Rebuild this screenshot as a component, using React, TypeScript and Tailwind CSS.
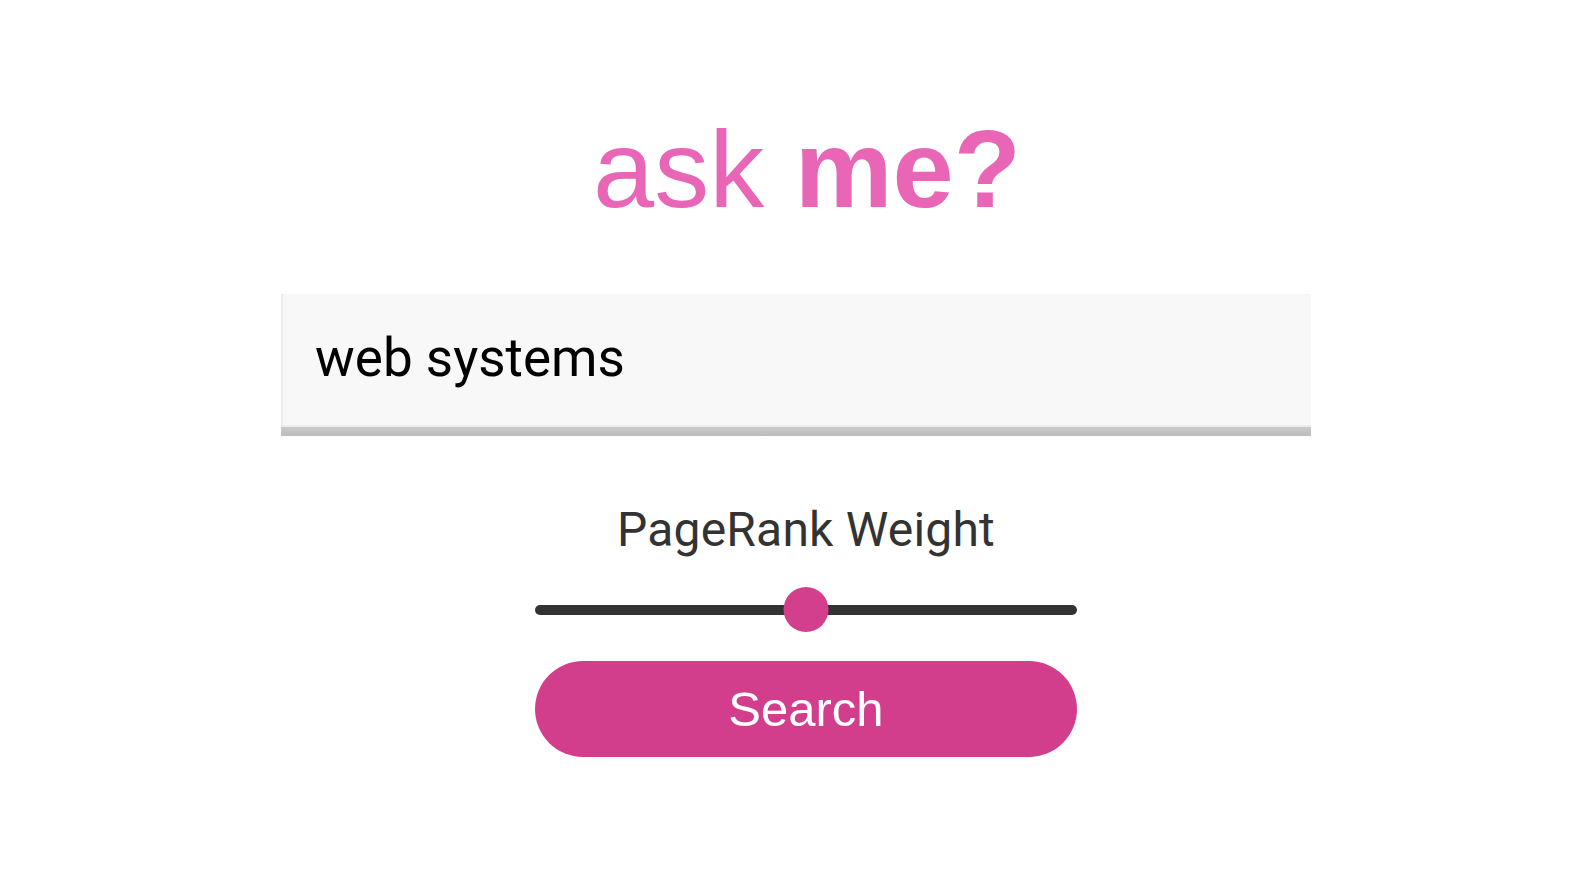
import React, { useState } from 'react';

// Search page: title, query box, pagerank weight slider and search button
const App: React.FC = () => {
  const [query] = useState('web systems');
  const [weight] = useState(50);

  return (
    <div className="min-h-screen w-full bg-white flex flex-col items-center pt-[114px]">
      <h1
        className="text-[110px] leading-none text-[#e866b5] ml-[22px]"
        style={{ fontFamily: '"Liberation Sans", Arial, sans-serif' }}
      >
        ask <span className="font-bold">me?</span>
      </h1>

      {/* Query box */}
      <div className="mt-[70px] w-[1030px] h-[142px] flex flex-col bg-[#f8f8f8] shadow-[inset_2px_0_2px_rgba(0,0,0,0.06)]">
        <div className="flex-1 pl-[34px] pt-[38px] border-b-2 border-b-[#ececec]">
          <div
            className="text-[53px] leading-none text-black"
            style={{ fontFamily: 'Roboto, "Noto Sans", sans-serif' }}
          >
            {query}
          </div>
        </div>
        <div className="h-[9px] bg-gradient-to-b from-[#c9c9c9] to-[#bdbdbd]" />
      </div>

      <div className="mt-[70px] w-[542px] ml-[20px] flex flex-col items-center">
        <div
          className="text-[48px] leading-none tracking-[0.2px] text-[#333333]"
          style={{ fontFamily: 'Roboto, "Noto Sans", sans-serif' }}
        >
          PageRank Weight
        </div>

        {/* Slider */}
        <div className="relative mt-[33px] w-[542px] h-[45px] flex items-center">
          <div className="w-full h-[10px] rounded-full bg-[#333333]" />
          <div
            className="absolute top-0 w-[45px] h-[45px] rounded-full bg-[#d43f8d] -translate-x-1/2"
            style={{ left: `${weight}%` }}
          />
        </div>

        <button
          className="mt-[29px] w-[542px] h-[96px] rounded-full bg-[#d33e8c] text-white text-[49px] leading-none flex items-center justify-center"
          style={{ fontFamily: '"Liberation Sans", Arial, sans-serif' }}
        >
          Search
        </button>
      </div>
    </div>
  );
};

export default App;
